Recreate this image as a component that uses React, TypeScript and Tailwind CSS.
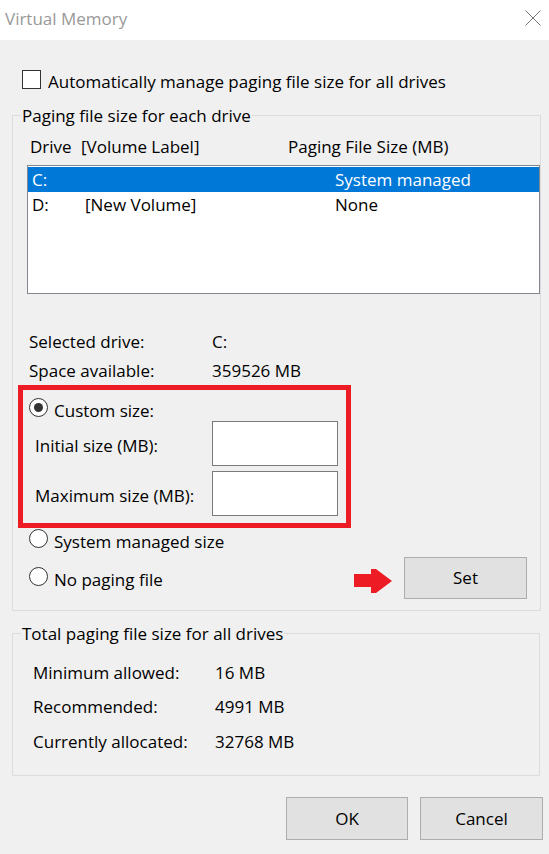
import React from "react";

function Radio({ checked }: { checked?: boolean }) {
  return (
    <span className="flex h-[19px] w-[19px] shrink-0 items-center justify-center rounded-full border border-[#333333] bg-white">
      {checked && <span className="h-[9px] w-[9px] rounded-full bg-[#333333]" />}
    </span>
  );
}

function Button({ label, width }: { label: string; width: string }) {
  return (
    <button
      className={`flex h-[42px] ${width} items-center justify-center border border-[#adadad] bg-[#e1e1e1] text-black`}
    >
      {label}
    </button>
  );
}

const drives = [
  { drive: "C:", label: "", size: "System managed", selected: true },
  { drive: "D:", label: "[New Volume]", size: "None", selected: false },
];

const totals = [
  { label: "Minimum allowed:", value: "16 MB", gap: "mt-[19px]" },
  { label: "Recommended:", value: "4991 MB", gap: "mt-[14px]" },
  { label: "Currently allocated:", value: "32768 MB", gap: "mt-[15px]" },
];

export default function App() {
  return (
    <div className="h-[854px] w-[549px] overflow-hidden bg-[#f0f0f0] font-['Open_Sans',sans-serif] text-[17px] leading-[20px] text-black">
      {/* title bar */}
      <div className="flex h-[40px] items-start justify-between bg-white">
        <span className="pl-[5px] pt-[7px] text-[17px] leading-[24px] text-[#999999]">
          Virtual Memory
        </span>
        <svg className="mr-[8px] mt-[10px]" width="16" height="16" viewBox="0 0 16 16">
          <path d="M0.5 0.5L15.5 15.5M15.5 0.5L0.5 15.5" stroke="#777777" strokeWidth="1" fill="none" />
        </svg>
      </div>

      {/* auto manage */}
      <div className="flex items-start gap-[7px] pl-[22px] pt-[30px]">
        <span className="h-[19px] w-[19px] border border-[#333333] bg-white" />
        <span className="mt-[2px]">Automatically manage paging file size for all drives</span>
      </div>

      {/* per drive */}
      <fieldset className="ml-[12px] mt-[12px] w-[528px] border border-[#dcdcdc] pb-[11px]">
        <legend className="ml-[8px] px-[1px] pt-[2px]">Paging file size for each drive</legend>

        <div className="mt-[11px] flex pl-[17px]">
          <span className="w-[51px]">Drive</span>
          <span className="w-[207px]">[Volume Label]</span>
          <span>Paging File Size (MB)</span>
        </div>

        <div className="ml-[14px] mt-[8px] h-[129px] w-[513px] border border-[#828790] bg-white pt-[1px]">
          {drives.map((d) => (
            <div
              key={d.drive}
              className={`flex h-[25px] pl-[4px] pt-[3px] ${d.selected ? "bg-[#0078d7] text-white" : "text-black"}`}
            >
              <span className="w-[53px]">{d.drive}</span>
              <span className="w-[250px]">{d.label}</span>
              <span>{d.size}</span>
            </div>
          ))}
        </div>

        <div className="mt-[38px] flex pl-[16px]">
          <span className="w-[183px]">Selected drive:</span>
          <span>C:</span>
        </div>
        <div className="mt-[9px] flex pl-[16px]">
          <span className="w-[183px]">Space available:</span>
          <span>359526 MB</span>
        </div>

        {/* highlighted custom size block */}
        <div className="ml-[5px] mt-[4px] h-[143px] w-[333px] border-[5px] border-[#ed1c24]">
          <div className="mt-[8px] flex items-start gap-[6px] pl-[6px]">
            <Radio checked />
            <span className="mt-[3px]">Custom size:</span>
          </div>
          <div className="flex items-center">
            <span className="w-[189px] pl-[12px] pt-[4px]">Initial size (MB):</span>
            <span className="h-[45px] w-[126px] border border-[#7a7a7a] bg-white" />
          </div>
          <div className="mt-[5px] flex items-center">
            <span className="w-[189px] pl-[12px] pt-[4px]">Maximum size (MB):</span>
            <span className="h-[45px] w-[126px] border border-[#7a7a7a] bg-white" />
          </div>
        </div>

        <div className="mt-[1px] flex items-start gap-[6px] pl-[16px]">
          <Radio />
          <span className="mt-[3px]">System managed size</span>
        </div>

        <div className="mt-[5px] flex h-[42px] items-center pl-[16px] pr-[13px]">
          <div className="flex flex-1 items-start gap-[6px]">
            <Radio />
            <span className="mt-[3px]">No paging file</span>
          </div>
          <svg className="mt-[6px]" width="38" height="24" viewBox="0 0 38 24">
            <path d="M0 5H17V0H22L38 12L22 24H17V18H0Z" fill="#ed1c24" />
          </svg>
          <div className="ml-[12px]">
            <Button label="Set" width="w-[123px]" />
          </div>
        </div>
      </fieldset>

      {/* totals */}
      <fieldset className="ml-[12px] mt-[11px] w-[528px] border border-[#dcdcdc] pb-[23px]">
        <legend className="ml-[8px] px-[1px] pt-[2px]">Total paging file size for all drives</legend>
        {totals.map((t) => (
          <div key={t.label} className={`${t.gap} flex pl-[20px]`}>
            <span className="w-[182px]">{t.label}</span>
            <span>{t.value}</span>
          </div>
        ))}
      </fieldset>

      <div className="mt-[21px] flex justify-end gap-[12px] pr-[6px]">
        <Button label="OK" width="w-[122px] h-[43px]" />
        <Button label="Cancel" width="w-[123px] h-[43px]" />
      </div>
    </div>
  );
}
